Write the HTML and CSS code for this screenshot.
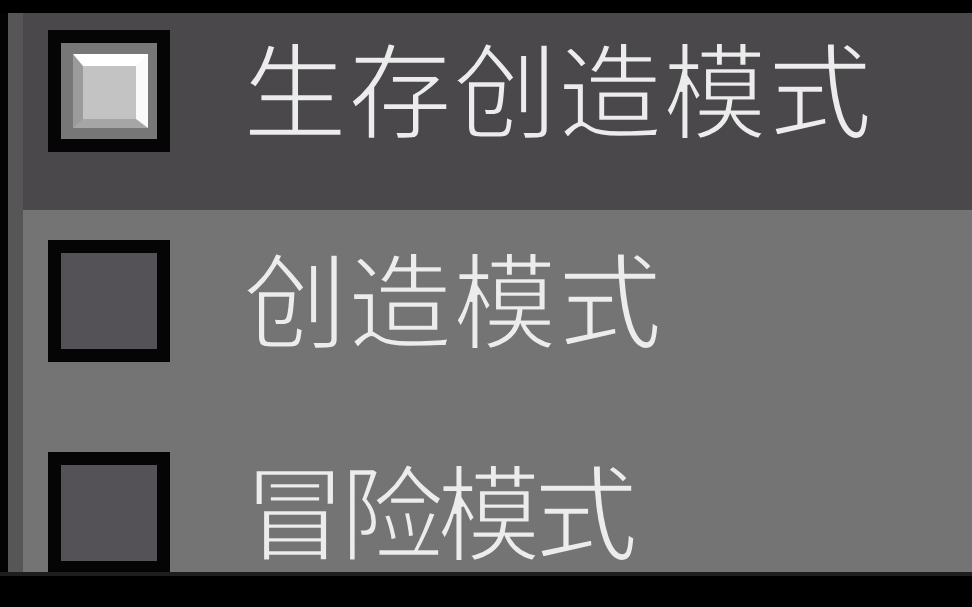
FILE: index.html
```html
<!DOCTYPE html>
<html lang="zh-CN">
<head>
<meta charset="utf-8">
<title>游戏模式</title>
<link rel="stylesheet" href="styles.css">
</head>
<body>
<div class="screen">
  <div class="topbar"></div>
  <div class="main">
    <div class="edge"></div>
    <div class="strip"></div>
    <div class="list">
      <div class="row selected">
        <span class="box checked"><span class="mark"></span></span>
        <span class="label">生存创造模式</span>
      </div>
      <div class="row">
        <span class="box"></span>
        <span class="label">创造模式</span>
      </div>
      <div class="row last">
        <span class="box"></span>
        <span class="label narrow">冒险模式</span>
      </div>
    </div>
  </div>
  <div class="bottombar"></div>
</div>
</body>
</html>
```

FILE: styles.css
```css
html, body {
  margin: 0;
  padding: 0;
  background: #000;
}

.screen {
  width: 972px;
  height: 607px;
  display: flex;
  flex-direction: column;
  overflow: hidden;
  background: #000;
  font-family: "Noto Sans CJK SC", "Noto Sans", sans-serif;
}

.topbar {
  height: 13px;
  flex: none;
  background: #000;
}

.main {
  height: 559px;
  flex: none;
  display: flex;
  overflow: hidden;
}

.bottombar {
  flex: 1;
  background: #000;
  border-top: 4px solid #1e1e1e;
}

.edge {
  width: 8px;
  flex: none;
  background: #030303;
}

.strip {
  width: 15px;
  flex: none;
  background: #565656;
}

.list {
  flex: 1;
  display: flex;
  flex-direction: column;
  background: #747474;
}

.row {
  flex: none;
  height: 212px;
  box-sizing: border-box;
  padding: 30px 0 0 25px;
  display: flex;
  align-items: flex-start;
  background: #747474;
  --row-bg: #747474;
}

.row.selected {
  height: 197px;
  padding-top: 17px;
  background: #4a484b;
  --row-bg: #4a484b;
}

.row.last {
  height: 150px;
}

.box {
  width: 122px;
  height: 122px;
  flex: none;
  box-sizing: border-box;
  border: 13px solid #050505;
  background: #545256;
  display: flex;
}

.box.checked {
  background: #777777;
  padding: 11px 9px 11px 12px;
}

.mark {
  flex: 1;
  background: #c3c3c3;
  border-top: 12px solid #ffffff;
  border-right: 12px solid #fafafa;
  border-left: 10px solid #9b9b9b;
  border-bottom: 9px solid #a6a6a6;
}

.label {
  margin: 4px 0 0 73px;
  font-size: 104px;
  line-height: 1;
  letter-spacing: 1px;
  color: #ececec;
  white-space: nowrap;
  -webkit-text-stroke: 2.5px var(--row-bg);
}

.label.narrow {
  letter-spacing: -7px;
}
```
